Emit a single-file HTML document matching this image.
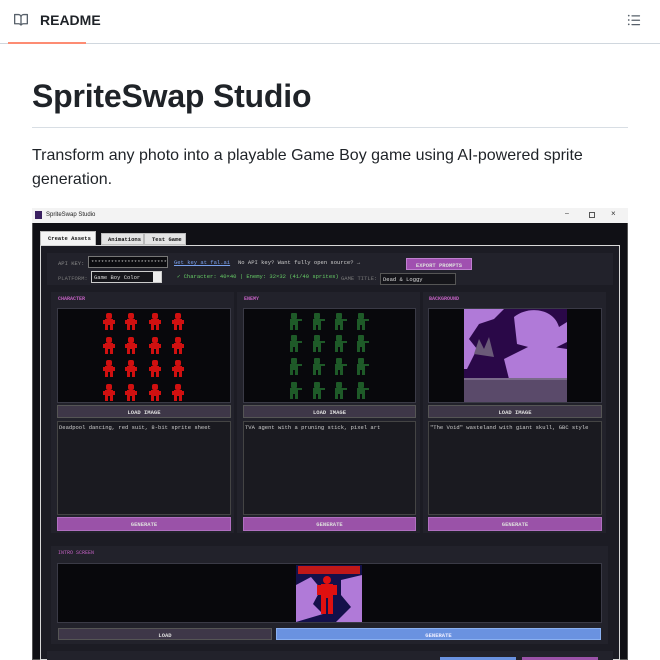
<!DOCTYPE html>
<html><head><meta charset="utf-8"><style>
*{box-sizing:border-box;margin:0;padding:0}
body{width:660px;height:660px;overflow:hidden;background:#fff;font-family:"Liberation Sans",sans-serif;color:#1f2328;position:relative}
.a{position:absolute}
.m{font-family:"Liberation Mono",monospace;font-size:5.5px;white-space:nowrap}
.btn{position:absolute;color:#ddd;font-family:"Liberation Mono",monospace;font-size:5.5px;text-align:center;font-weight:bold}
.lbl{position:absolute;color:#c060c0;font-family:"Liberation Mono",monospace;font-size:5px;font-weight:bold}
.box{position:absolute;background:#08080c;border:1px solid #3a3a46}
.pn{position:absolute;background:#22222b}
</style></head><body>
<svg class="a" style="left:14px;top:13px" width="14" height="14" viewBox="0 0 16 16"><path fill="#57606a" d="M0 1.75A.75.75 0 0 1 .75 1h4.253c1.227 0 2.317.59 3 1.501A3.743 3.743 0 0 1 11.006 1h4.245a.75.75 0 0 1 .75.75v10.5a.75.75 0 0 1-.75.75h-4.507a2.25 2.25 0 0 0-1.591.659l-.622.621a.75.75 0 0 1-1.06 0l-.622-.621A2.25 2.25 0 0 0 5.258 13H.75a.75.75 0 0 1-.75-.75Zm7.251 10.324.004-5.073-.002-2.253A2.25 2.25 0 0 0 5.003 2.5H1.5v9h3.757a3.75 3.75 0 0 1 1.994.574ZM8.755 4.75l-.004 7.322a3.752 3.752 0 0 1 1.992-.572H14.5v-9h-3.495a2.25 2.25 0 0 0-2.25 2.25Z"/></svg>
<div class="a" style="left:40px;top:12px;font-size:14px;font-weight:bold">README</div>
<svg class="a" style="left:627px;top:13px" width="14" height="14" viewBox="0 0 16 16"><path fill="#57606a" d="M5.75 2.5h8.5a.75.75 0 0 1 0 1.5h-8.5a.75.75 0 0 1 0-1.5Zm0 5h8.5a.75.75 0 0 1 0 1.5h-8.5a.75.75 0 0 1 0-1.5Zm0 5h8.5a.75.75 0 0 1 0 1.5h-8.5a.75.75 0 0 1 0-1.5ZM2 14a1 1 0 1 1 0-2 1 1 0 0 1 0 2Zm1-6a1 1 0 1 1-2 0 1 1 0 0 1 2 0ZM2 4a1 1 0 1 1 0-2 1 1 0 0 1 0 2Z"/></svg>
<div class="a" style="left:0;top:43px;width:660px;height:1px;background:#d0d7de"></div>
<div class="a" style="left:8px;top:42px;width:78px;height:2px;background:#fd8c73"></div>
<div class="a" style="left:32px;top:78px;font-size:32px;font-weight:bold;letter-spacing:-0.2px">SpriteSwap Studio</div>
<div class="a" style="left:32px;top:127px;width:596px;height:1px;background:#d8dee4"></div>
<div class="a" style="left:32px;top:144px;width:596px;font-size:16px;line-height:24px">Transform any photo into a playable Game Boy game using AI-powered sprite generation.</div>

<!-- window -->
<div class="a" style="left:32px;top:208px;width:596px;height:452px;background:#101015;border:1px solid #555"></div>
<div class="a" style="left:32px;top:208px;width:596px;height:15px;background:#f3f3f3"></div>
<div class="a" style="left:35px;top:211px;width:7px;height:8px;background:#3a2060"></div>
<div class="a" style="left:46px;top:212px;font-size:6px;color:#222">SpriteSwap Studio</div>
<div class="a" style="left:565px;top:210px;font-size:7px;color:#333">–</div>
<div class="a" style="left:589px;top:212px;width:6px;height:6px;border:1px solid #555"></div>
<div class="a" style="left:611px;top:209px;font-size:8px;color:#333">×</div>
<!-- tabs -->
<div class="a m" style="left:40px;top:231px;width:56px;height:15px;background:#f4f4f4;border:1px solid #bbb;color:#111;font-weight:bold;padding:3px 0 0 7px">Create Assets</div>
<div class="a m" style="left:101px;top:233px;width:43px;height:12px;background:#e4e4e4;border:1px solid #bbb;color:#111;font-weight:bold;padding:2px 0 0 6px">Animations</div>
<div class="a m" style="left:144px;top:233px;width:42px;height:12px;background:#e4e4e4;border:1px solid #bbb;color:#111;font-weight:bold;padding:2px 0 0 7px">Test Game</div>
<div class="a" style="left:40px;top:245px;width:580px;height:415px;background:#1c1c24;border:1px solid #d8d8d8"></div>
<!-- config -->
<div class="pn" style="left:47px;top:253px;width:566px;height:32px"></div>
<div class="a m" style="left:58px;top:260px;color:#888">API KEY:</div>
<div class="a m" style="left:88px;top:256px;width:80px;height:12px;border:1px solid #777;background:#0c0c10;color:#bbb;padding:2px 0 0 2px;overflow:hidden">****************************</div>
<div class="a m" style="left:174px;top:259px;color:#7aa2f0;text-decoration:underline">Get key at fal.ai</div>
<div class="a m" style="left:238px;top:259px;color:#ccc">No API key? Want fully open source? →</div>
<div class="btn" style="left:406px;top:258px;width:66px;height:12px;background:#a050b0;border:1px solid #c080d0;padding-top:3px">EXPORT PROMPTS</div>
<div class="a m" style="left:58px;top:275px;color:#777">PLATFORM:</div>
<div class="a m" style="left:91px;top:271px;width:71px;height:12px;border:1px solid #ccc;background:#15151a;color:#ddd;padding:2px 0 0 2px">Game Boy Color</div>
<div class="a" style="left:153px;top:272px;width:8px;height:10px;background:#eee"></div>
<div class="a m" style="left:177px;top:273px;color:#6c6">✓ Character: 40×40 | Enemy: 32×32 (41/40 sprites)</div>
<div class="a m" style="left:341px;top:275px;color:#777">GAME TITLE:</div>
<div class="a m" style="left:380px;top:273px;width:76px;height:12px;border:1px solid #555;background:#15151a;color:#ddd;padding:2px 0 0 2px">Dead &amp; Loggy</div>

<!-- three panels -->
<div class="pn" style="left:51px;top:292px;width:183px;height:241px"></div>
<div class="pn" style="left:237px;top:292px;width:183px;height:241px"></div>
<div class="pn" style="left:423px;top:292px;width:183px;height:241px"></div>
<div class="lbl" style="left:58px;top:296px">CHARACTER</div>
<div class="lbl" style="left:244px;top:296px">ENEMY</div>
<div class="lbl" style="left:429px;top:296px">BACKGROUND</div>
<div class="box" style="left:57px;top:308px;width:174px;height:95px"></div>
<div class="box" style="left:243px;top:308px;width:173px;height:95px"></div>
<div class="box" style="left:428px;top:308px;width:174px;height:95px"></div>

<svg class="a" style="left:57px;top:308px" width="174" height="95">
<defs><g id="r" fill="#d01010"><rect x="3" y="0" width="6" height="6" rx="2"/><rect x="2" y="6" width="8" height="6"/><rect x="0" y="7" width="2" height="4"/><rect x="10" y="7" width="2" height="4"/><rect x="2" y="12" width="3" height="5"/><rect x="7" y="12" width="3" height="5"/></g>
<g id="g" fill="#1e5a28"><rect x="3" y="0" width="6" height="6" rx="1"/><rect x="2" y="6" width="8" height="6"/><rect x="10" y="6" width="4" height="2"/><rect x="2" y="12" width="3" height="5"/><rect x="7" y="12" width="3" height="5"/></g></defs>
<use href="#r" x="46" y="5"/><use href="#r" x="68" y="5"/><use href="#r" x="92" y="5"/><use href="#r" x="115" y="5"/>
<use href="#r" x="46" y="29"/><use href="#r" x="68" y="29"/><use href="#r" x="92" y="29"/><use href="#r" x="115" y="29"/>
<use href="#r" x="46" y="52"/><use href="#r" x="68" y="52"/><use href="#r" x="92" y="52"/><use href="#r" x="115" y="52"/>
<use href="#r" x="46" y="76"/><use href="#r" x="68" y="76"/><use href="#r" x="92" y="76"/><use href="#r" x="115" y="76"/>
</svg>
<svg class="a" style="left:243px;top:308px" width="173" height="95">
<use href="#g" x="45" y="5"/><use href="#g" x="68" y="5"/><use href="#g" x="90" y="5"/><use href="#g" x="112" y="5"/>
<use href="#g" x="45" y="27"/><use href="#g" x="68" y="27"/><use href="#g" x="90" y="27"/><use href="#g" x="112" y="27"/>
<use href="#g" x="45" y="50"/><use href="#g" x="68" y="50"/><use href="#g" x="90" y="50"/><use href="#g" x="112" y="50"/>
<use href="#g" x="45" y="74"/><use href="#g" x="68" y="74"/><use href="#g" x="90" y="74"/><use href="#g" x="112" y="74"/>
</svg>
<svg class="a" style="left:464px;top:309px" width="103" height="93">
<rect width="103" height="93" fill="#2a0848"/>
<path d="M0 0h40l-10 10-15 5-10 15 8 10-10 20H0Z" fill="#b07ad8"/>
<path d="M50 8c15-12 40-8 45 10l8-5v20l-20 10-30-8Z" fill="#b07ad8"/>
<path d="M40 50l30-15 33 5v30H45Z" fill="#b07ad8"/>
<path d="M10 45l5-15 5 10 5-12 5 20Z" fill="#6a5a78"/>
<rect y="69" width="103" height="24" fill="#5a4a6a"/>
<rect y="69" width="103" height="2" fill="#7a6a8a"/>
</svg>

<div class="btn" style="left:57px;top:405px;width:174px;height:13px;background:#3e3748;border:1px solid #555;padding-top:3px">LOAD IMAGE</div>
<div class="btn" style="left:243px;top:405px;width:173px;height:13px;background:#3e3748;border:1px solid #555;padding-top:3px">LOAD IMAGE</div>
<div class="btn" style="left:428px;top:405px;width:174px;height:13px;background:#3e3748;border:1px solid #555;padding-top:3px">LOAD IMAGE</div>
<div class="a m" style="left:57px;top:421px;width:174px;height:94px;background:#1a1a20;border:1px solid #444;color:#ccc;padding:2px 1px">Deadpool dancing, red suit, 8-bit sprite sheet</div>
<div class="a m" style="left:243px;top:421px;width:173px;height:94px;background:#1a1a20;border:1px solid #444;color:#ccc;padding:2px 1px">TVA agent with a pruning stick, pixel art</div>
<div class="a m" style="left:428px;top:421px;width:174px;height:94px;background:#1a1a20;border:1px solid #444;color:#ccc;padding:2px 1px">"The Void" wasteland with giant skull, GBC style</div>
<div class="btn" style="left:57px;top:517px;width:174px;height:14px;background:#9a52a8;border:1px solid #b070c0;padding-top:3px">GENERATE</div>
<div class="btn" style="left:243px;top:517px;width:173px;height:14px;background:#9a52a8;border:1px solid #b070c0;padding-top:3px">GENERATE</div>
<div class="btn" style="left:428px;top:517px;width:174px;height:14px;background:#9a52a8;border:1px solid #b070c0;padding-top:3px">GENERATE</div>

<!-- intro -->
<div class="pn" style="left:51px;top:546px;width:557px;height:98px"></div>
<div class="lbl" style="left:58px;top:550px;font-weight:normal">INTRO SCREEN</div>
<div class="box" style="left:57px;top:563px;width:545px;height:60px"></div>
<svg class="a" style="left:296px;top:565px" width="66" height="57">
<rect width="66" height="57" fill="#14104a"/>
<path d="M0 20l15-8 10 12-8 15 10 10-27 8Z" fill="#b07ad8"/>
<path d="M45 15l21-5v47H40l15-15-10-12Z" fill="#b07ad8"/>
<rect x="2" y="1" width="62" height="8" fill="#c01818"/>
<g fill="#e01010"><circle cx="31" cy="15" r="4"/><rect x="25" y="19" width="12" height="14"/><rect x="21" y="20" width="4" height="10"/><rect x="37" y="20" width="4" height="10"/><rect x="25" y="33" width="5" height="16"/><rect x="32" y="33" width="5" height="16"/></g>
</svg>
<div class="btn" style="left:58px;top:628px;width:214px;height:12px;background:#3e3748;border:1px solid #555;padding-top:3px">LOAD</div>
<div class="btn" style="left:276px;top:628px;width:325px;height:12px;background:#6a92e0;border:1px solid #8ab0f0;padding-top:3px;color:#eef">GENERATE</div>
<div class="pn" style="left:47px;top:651px;width:566px;height:9px"></div>
<div class="a" style="left:440px;top:657px;width:76px;height:3px;background:#6a92e0"></div>
<div class="a" style="left:522px;top:657px;width:76px;height:3px;background:#9a52a8"></div>
</body></html>
